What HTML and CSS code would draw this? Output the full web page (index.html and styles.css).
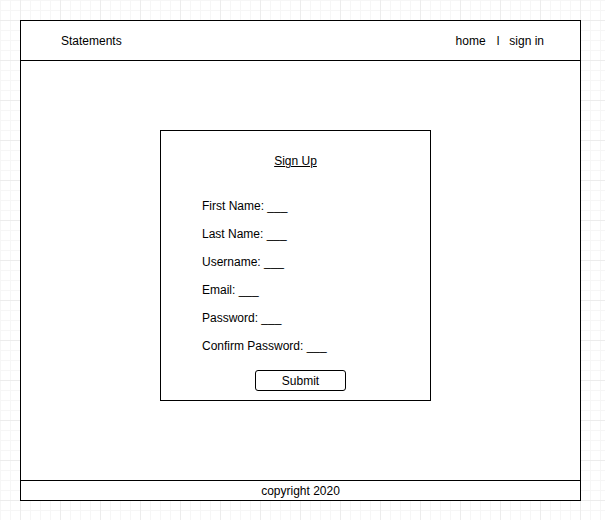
FILE: index.html
```html
<!DOCTYPE html>
<html>
<head>
<meta charset="utf-8">
<link rel="stylesheet" href="styles.css">
</head>
<body>
<div class="frame">
  <header class="topbar">
    <span class="brand">Statements</span>
    <nav class="nav">
      <span class="nav-home">home</span>
      <span>l</span>
      <span>sign in</span>
    </nav>
  </header>
  <main class="main">
    <section class="card">
      <div class="title">Sign Up</div>
      <div class="fields">
        <div class="field">First Name: ___</div>
        <div class="field">Last Name: ___</div>
        <div class="field">Username: ___</div>
        <div class="field">Email: ___</div>
        <div class="field">Password: ___</div>
        <div class="field">Confirm Password: ___</div>
      </div>
      <div class="submit">Submit</div>
    </section>
  </main>
  <footer class="footer">copyright 2020</footer>
</div>
</body>
</html>
```
FILE: styles.css
```css
html, body {
  margin: 0;
  padding: 0;
}
body {
  width: 605px;
  height: 520px;
  overflow: hidden;
  font-family: "Liberation Sans", Arial, sans-serif;
  font-size: 12px;
  line-height: 14px;
  color: #000;
  background-color: #fff;
  background-image:
    linear-gradient(to right, #ececec 1px, transparent 1px),
    linear-gradient(to bottom, #ececec 1px, transparent 1px),
    linear-gradient(to right, #f6f6f6 1px, transparent 1px),
    linear-gradient(to bottom, #f6f6f6 1px, transparent 1px);
  background-size: 40px 40px, 40px 40px, 10px 10px, 10px 10px;
  background-position: 20px 20px, 20px 20px, 0 0, 0 0;
}
.frame {
  box-sizing: border-box;
  margin: 20px 0 0 20px;
  width: 561px;
  height: 481px;
  border: 1px solid #000;
  background: #fff;
  display: flex;
  flex-direction: column;
}
.topbar {
  box-sizing: border-box;
  height: 40px;
  border-bottom: 1px solid #000;
  display: flex;
  align-items: center;
  justify-content: space-between;
  padding: 0 36px 0 40px;
}
.nav {
  display: flex;
  gap: 10px;
}
.nav-home {
  margin-right: 1px;
}
.main {
  flex: 1;
  padding: 69px 0 0 139px;
}
.card {
  box-sizing: border-box;
  width: 271px;
  height: 271px;
  border: 1px solid #000;
  padding: 23px 0 0 41px;
}
.title {
  text-decoration: underline;
  text-align: center;
  margin-left: -41px;
}
.fields {
  margin-top: 31px;
  display: flex;
  flex-direction: column;
  gap: 14px;
}
.submit {
  box-sizing: border-box;
  margin: 17px 0 0 53px;
  width: 91px;
  height: 21px;
  border: 1px solid #000;
  border-radius: 3px;
  display: flex;
  align-items: center;
  justify-content: center;
}
.footer {
  box-sizing: border-box;
  height: 20px;
  border-top: 1px solid #000;
  display: flex;
  align-items: center;
  justify-content: center;
}
```
